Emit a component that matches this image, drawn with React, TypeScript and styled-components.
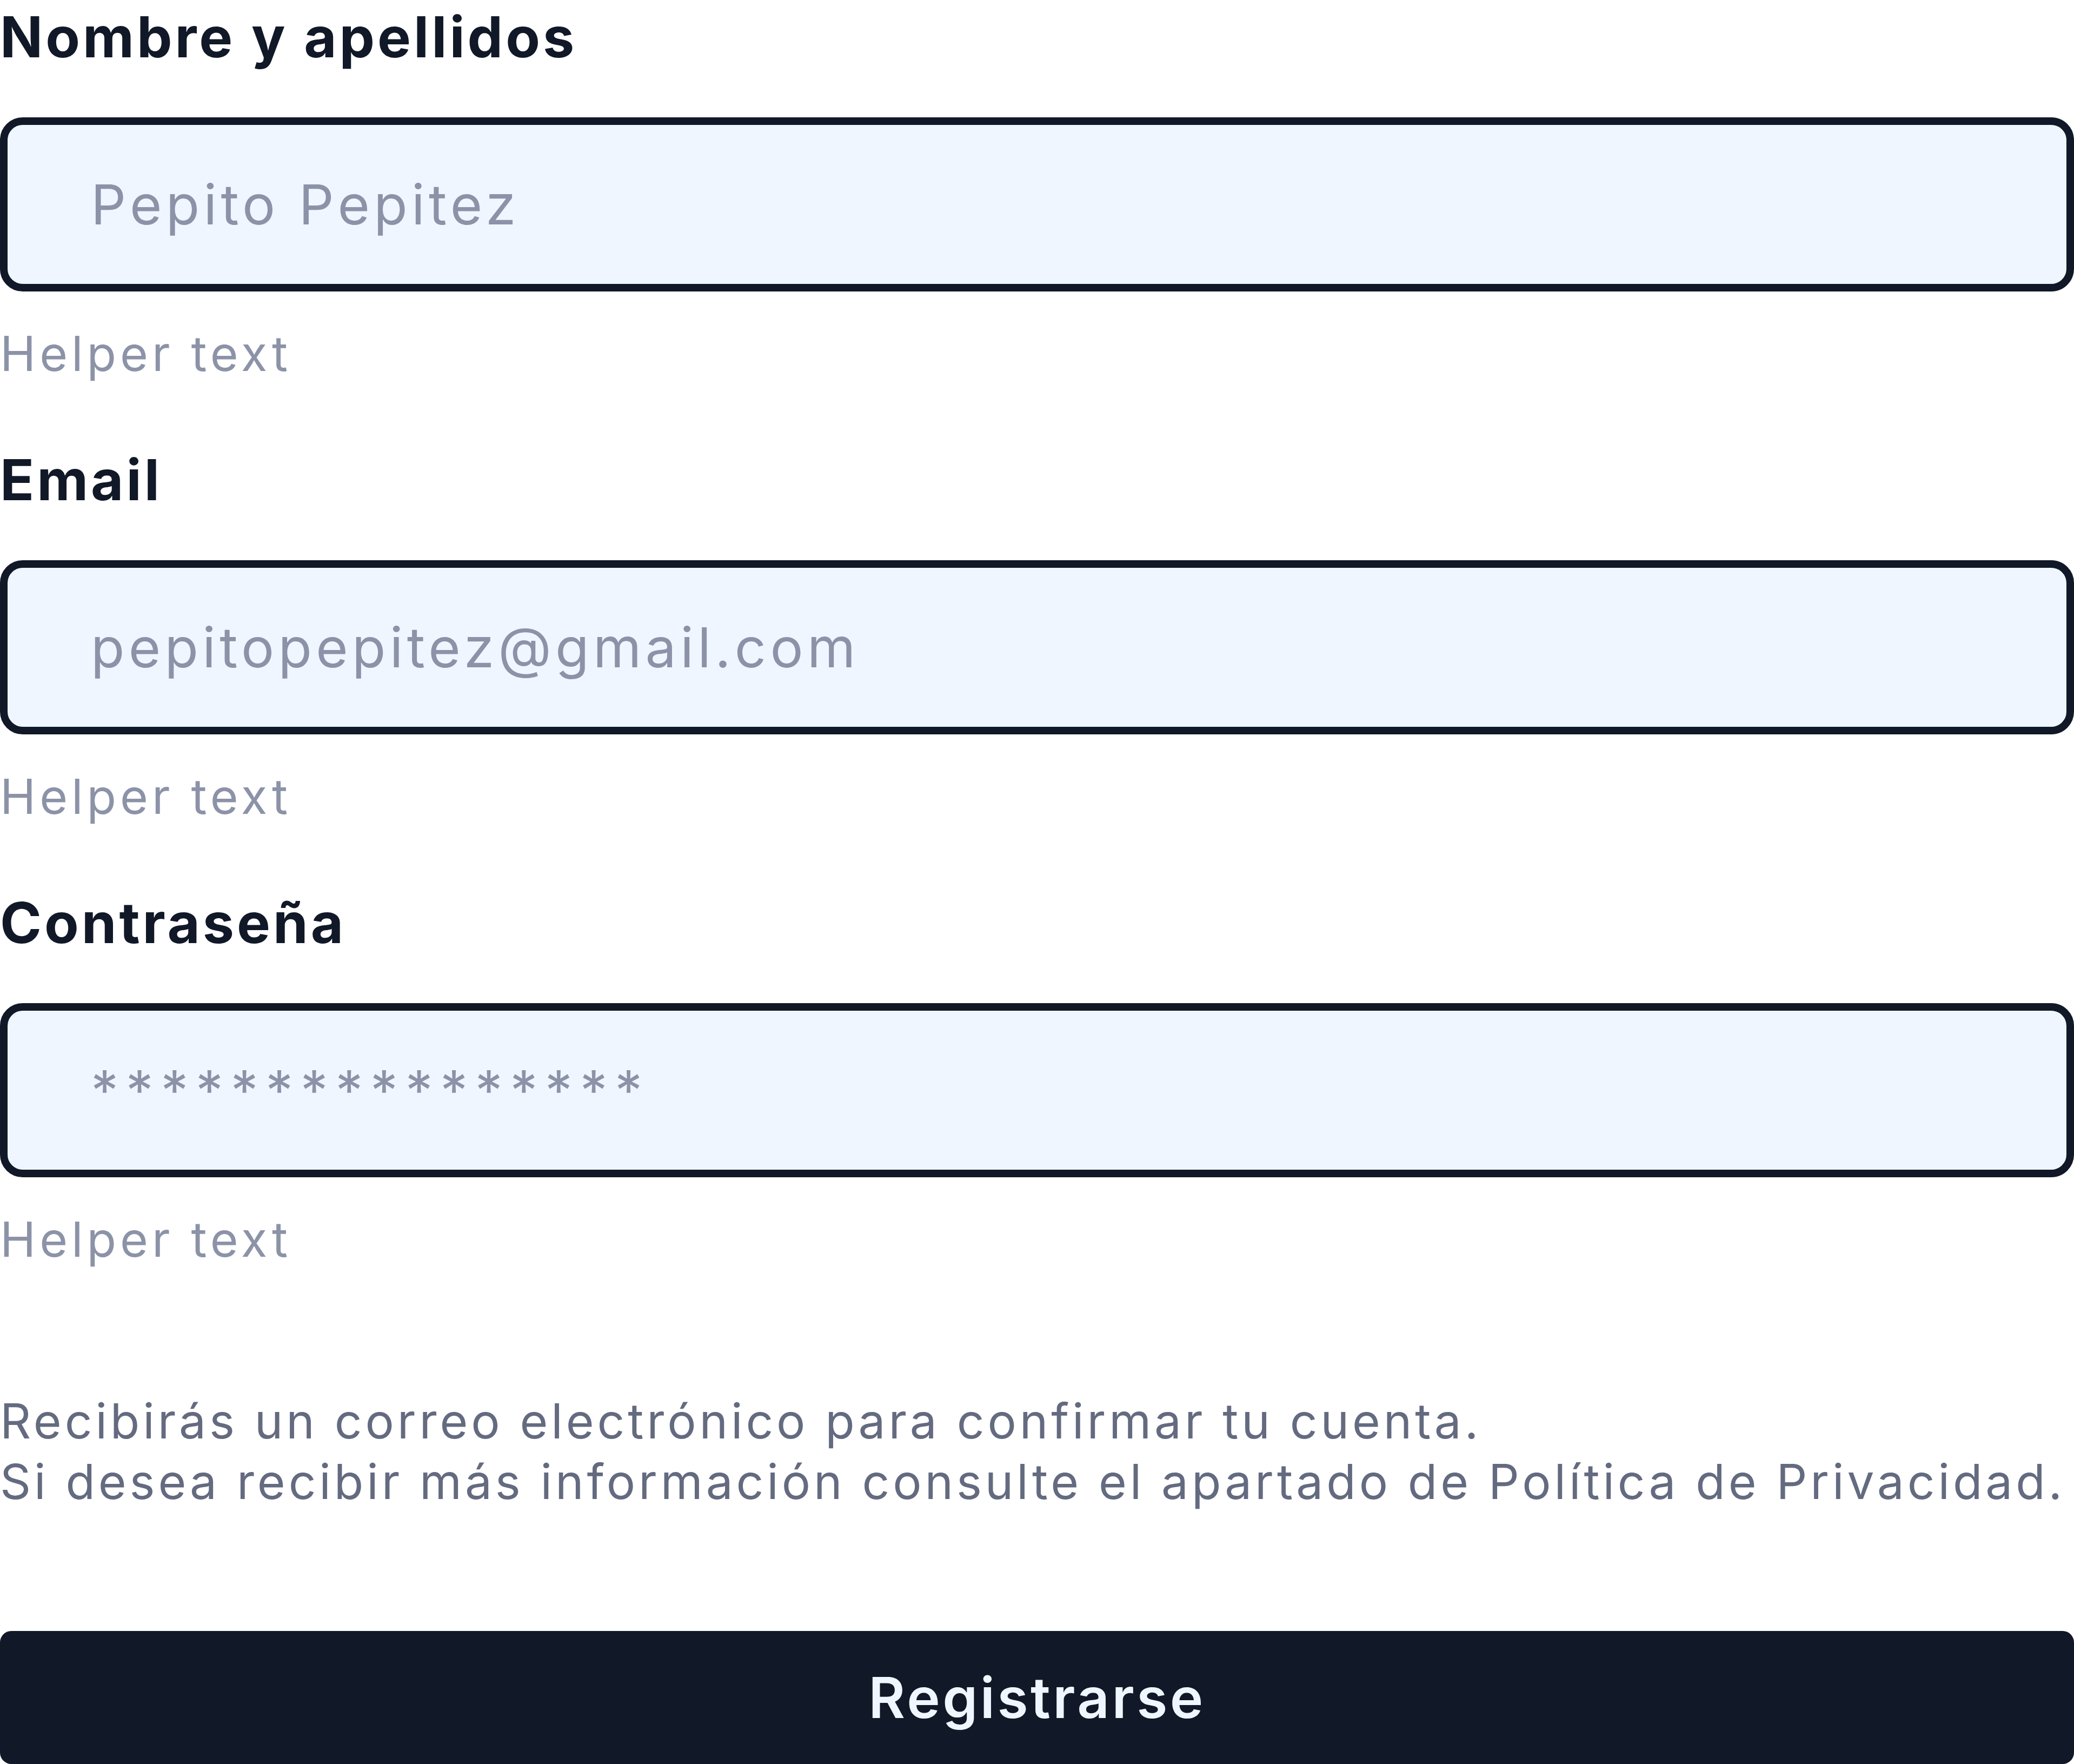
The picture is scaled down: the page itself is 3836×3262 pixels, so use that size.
import styled, { createGlobalStyle } from 'styled-components';

const GlobalStyle = createGlobalStyle`
  html, body {
    margin: 0;
    padding: 0;
    background: #ffffff;
  }

  * {
    box-sizing: border-box;
  }
`;

const FONT = `Inter, 'Noto Sans', 'Liberation Sans', sans-serif`;

const Form = styled.form`
  display: flex;
  flex-direction: column;
  width: 3836px;
  font-family: ${FONT};
`;

const Fields = styled.div`
  display: flex;
  flex-direction: column;
  gap: 105px;
`;

const Field = styled.div`
  display: flex;
  flex-direction: column;
`;

const Label = styled.label`
  margin-bottom: 80px;
  font-size: 104px;
  font-weight: 700;
  line-height: 137px;
  letter-spacing: 5px;
  color: #111827;
`;

const Input = styled.input<{ $masked?: boolean }>`
  width: 100%;
  height: 322px;
  padding: 0 60px 0 154px;
  border: 14px solid #111827;
  border-radius: 42px;
  background: #eff6ff;
  font-family: ${FONT};
  font-size: 102px;
  font-weight: 400;
  letter-spacing: ${(p) => (p.$masked ? '13.5px' : '7.3px')};
  color: #111827;
  outline: none;

  &::placeholder {
    color: #8c93a8;
    opacity: 1;
  }
`;

const Helper = styled.span`
  margin-top: 55px;
  font-size: 89px;
  line-height: 120px;
  letter-spacing: 7px;
  color: #8c93a8;
`;

const Notice = styled.p`
  margin: 220px 0 0;
  font-size: 89px;
  line-height: 112px;
  letter-spacing: 5.9px;
  color: #646b80;
`;

const NoticeLine = styled.span`
  display: block;
  white-space: nowrap;
`;

const SubmitButton = styled.button`
  display: flex;
  align-items: center;
  justify-content: center;
  height: 246px;
  margin-top: 220px;
  border: 0;
  border-radius: 21px;
  background: #111827;
  font-family: ${FONT};
  font-size: 104px;
  font-weight: 600;
  letter-spacing: 4.5px;
  color: #eff6ff;
  cursor: pointer;
`;

const fields = [
  { id: 'name', label: 'Nombre y apellidos', type: 'text', placeholder: 'Pepito Pepitez' },
  { id: 'email', label: 'Email', type: 'email', placeholder: 'pepitopepitez@gmail.com' },
  { id: 'password', label: 'Contraseña', type: 'password', placeholder: '****************' },
];

function App() {
  return (
    <>
      <GlobalStyle />
      <Form onSubmit={(e) => e.preventDefault()}>
        <Fields>
          {fields.map((f) => (
            <Field key={f.id}>
              <Label htmlFor={f.id}>{f.label}</Label>
              <Input
                id={f.id}
                type={f.type}
                placeholder={f.placeholder}
                $masked={f.type === 'password'}
              />
              <Helper>Helper text</Helper>
            </Field>
          ))}
        </Fields>
        <Notice>
          <NoticeLine>Recibirás un correo electrónico para confirmar tu cuenta.</NoticeLine>
          <NoticeLine>
            Si desea recibir más información consulte el apartado de Política de Privacidad.
          </NoticeLine>
        </Notice>
        <SubmitButton type="submit">Registrarse</SubmitButton>
      </Form>
    </>
  );
}

export default App;
